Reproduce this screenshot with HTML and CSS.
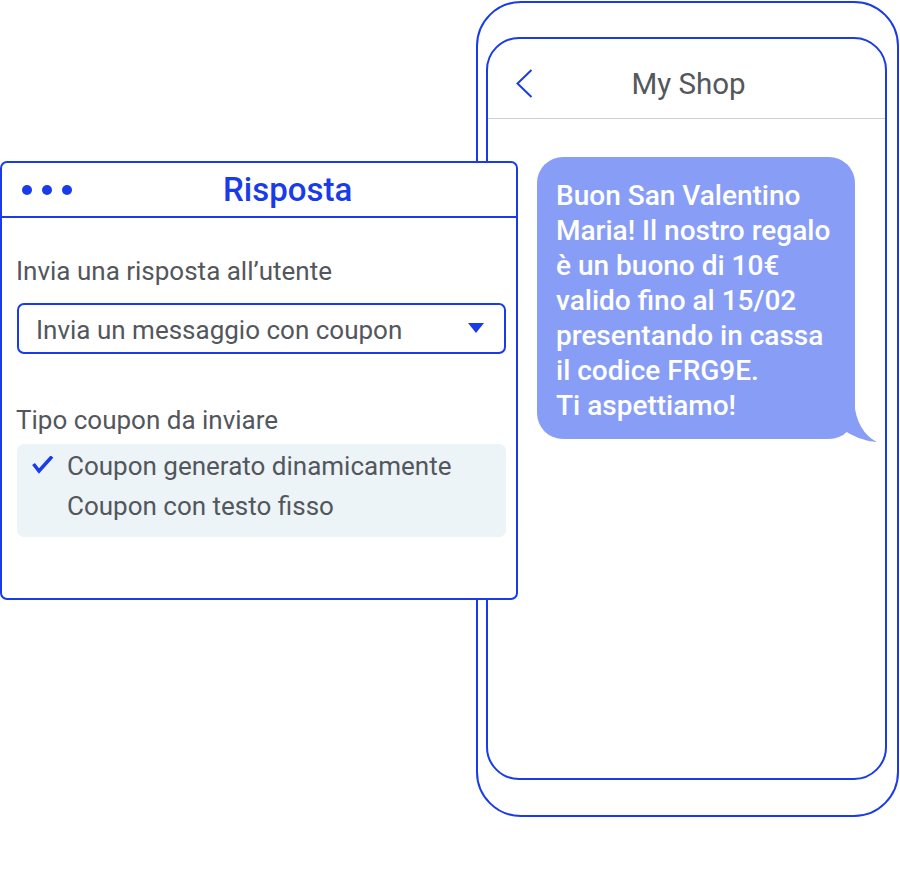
FILE: index.html
```html
<!DOCTYPE html>
<html lang="it">
<head>
<meta charset="utf-8">
<title>Risposta - My Shop</title>
<link rel="stylesheet" href="styles.css">
</head>
<body>
<div class="stage">
  <div class="phone">
    <div class="screen">
      <div class="topbar">
        <svg class="back" width="17" height="29" viewBox="0 0 17 29"><polyline points="15.5,1 1.5,14.5 15.5,28" fill="none" stroke="#1a3be8" stroke-width="2"/></svg>
        <span class="shop">My Shop</span>
        <span></span>
      </div>
      <div class="chat">
        <div class="bubble">
          Buon San Valentino<br>Maria! Il nostro regalo<br>è un buono di 10€<br>valido fino al 15/02<br>presentando in cassa<br>il codice FRG9E.<br>Ti aspettiamo!
          <svg class="tail" width="45" height="50" viewBox="0 0 45 50"><path d="M17 6 Q20 36 40 46 Q22 45 5 33 Z" fill="#889ef6"/></svg>
        </div>
      </div>
    </div>
  </div>

  <div class="panel">
    <div class="panel-head">
      <div class="dots"><span></span><span></span><span></span></div>
      <div class="panel-title">Risposta</div>
    </div>
    <div class="panel-body">
      <div class="label first">Invia una risposta all’utente</div>
      <div class="select">
        <span>Invia un messaggio con coupon</span>
        <svg width="16" height="10" viewBox="0 0 16 10"><polygon points="0,0 16,0 8,10" fill="#1a3be8"/></svg>
      </div>
      <div class="label second">Tipo coupon da inviare</div>
      <div class="options">
        <div class="option">
          <svg class="check" width="22" height="20" viewBox="0 0 22 20"><polyline points="1.5,8 7,15 20,0.5" fill="none" stroke="#1a3be8" stroke-width="3.5"/></svg>
          <span>Coupon generato dinamicamente</span>
        </div>
        <div class="option">
          <span class="check"></span>
          <span>Coupon con testo fisso</span>
        </div>
      </div>
    </div>
  </div>
</div>
</body>
</html>
```

FILE: styles.css
```css
* { box-sizing: border-box; }
html, body { margin: 0; padding: 0; background: #fff; }
body { font-family: Roboto, "Noto Sans", Arial, sans-serif; color: #53575c; }

.stage {
  position: relative;
  width: 900px;
  height: 882px;
  overflow: hidden;
}

/* Phone */
.phone {
  margin-left: 476px;
  margin-top: 1px;
  width: 423px;
  height: 816px;
  border: 2px solid #1a3be8;
  border-radius: 45px;
  padding: 34px 0 0 8px;
}
.screen {
  width: 401px;
  height: 743px;
  border: 2px solid #1a3be8;
  border-radius: 33px;
  overflow: hidden;
}
.topbar {
  height: 80px;
  border-bottom: 1px solid #cfd0d3;
  display: grid;
  grid-template-columns: 1fr auto 1fr;
  align-items: center;
  padding: 27px 28px 17px 28px;
}
.back { display: block; }
.shop {
  font-size: 29.5px;
  line-height: 34px;
  color: #54575b;
  padding-left: 4px;
}
.chat { padding: 38px 0 0 49px; }
.bubble {
  position: relative;
  width: 318px;
  background: #889ef6;
  border-radius: 26px;
  color: #fff;
  font-size: 28px;
  font-weight: 500;
  line-height: 35px;
  padding: 21px 6px 16px 19px;
  white-space: nowrap;
}
.tail {
  position: absolute;
  left: 300px;
  top: 239px;
}

/* Panel */
.panel {
  position: absolute;
  left: 0;
  top: 161px;
  width: 518px;
  height: 439px;
  background: #fff;
  border: 2px solid #1a3be8;
  border-radius: 7px;
}
.panel-head {
  height: 55px;
  border-bottom: 2px solid #1a3be8;
  display: flex;
  align-items: center;
  padding-left: 20px;
}
.dots { display: flex; gap: 10px; }
.dots span {
  width: 10px;
  height: 10px;
  border-radius: 50%;
  background: #1a3be8;
}
.panel-title {
  margin-left: 151px;
  font-size: 33px;
  font-weight: 500;
  color: #1a3be8;
  line-height: 38px;
}
.panel-body { padding: 0 10px 0 14px; }
.label {
  font-size: 26px;
  line-height: 30px;
}
.label.first { margin-top: 38px; }
.select {
  margin-top: 17px;
  margin-left: 1px;
  width: 489px;
  height: 51px;
  border: 2px solid #1a3be8;
  border-radius: 7px;
  display: flex;
  align-items: center;
  justify-content: space-between;
  padding: 3px 20px 0 17px;
  font-size: 26px;
}
.select svg { margin-top: -4px; }
.label.second { margin-top: 51px; }
.options {
  margin-top: 9px;
  margin-left: 1px;
  width: 489px;
  background: #ecf4f7;
  border-radius: 7px;
  padding: 2px 0 11px 15px;
}
.option {
  display: flex;
  align-items: center;
  height: 40px;
  font-size: 26px;
  gap: 13px;
}
.check { width: 22px; height: 20px; display: block; flex: none; }
```
